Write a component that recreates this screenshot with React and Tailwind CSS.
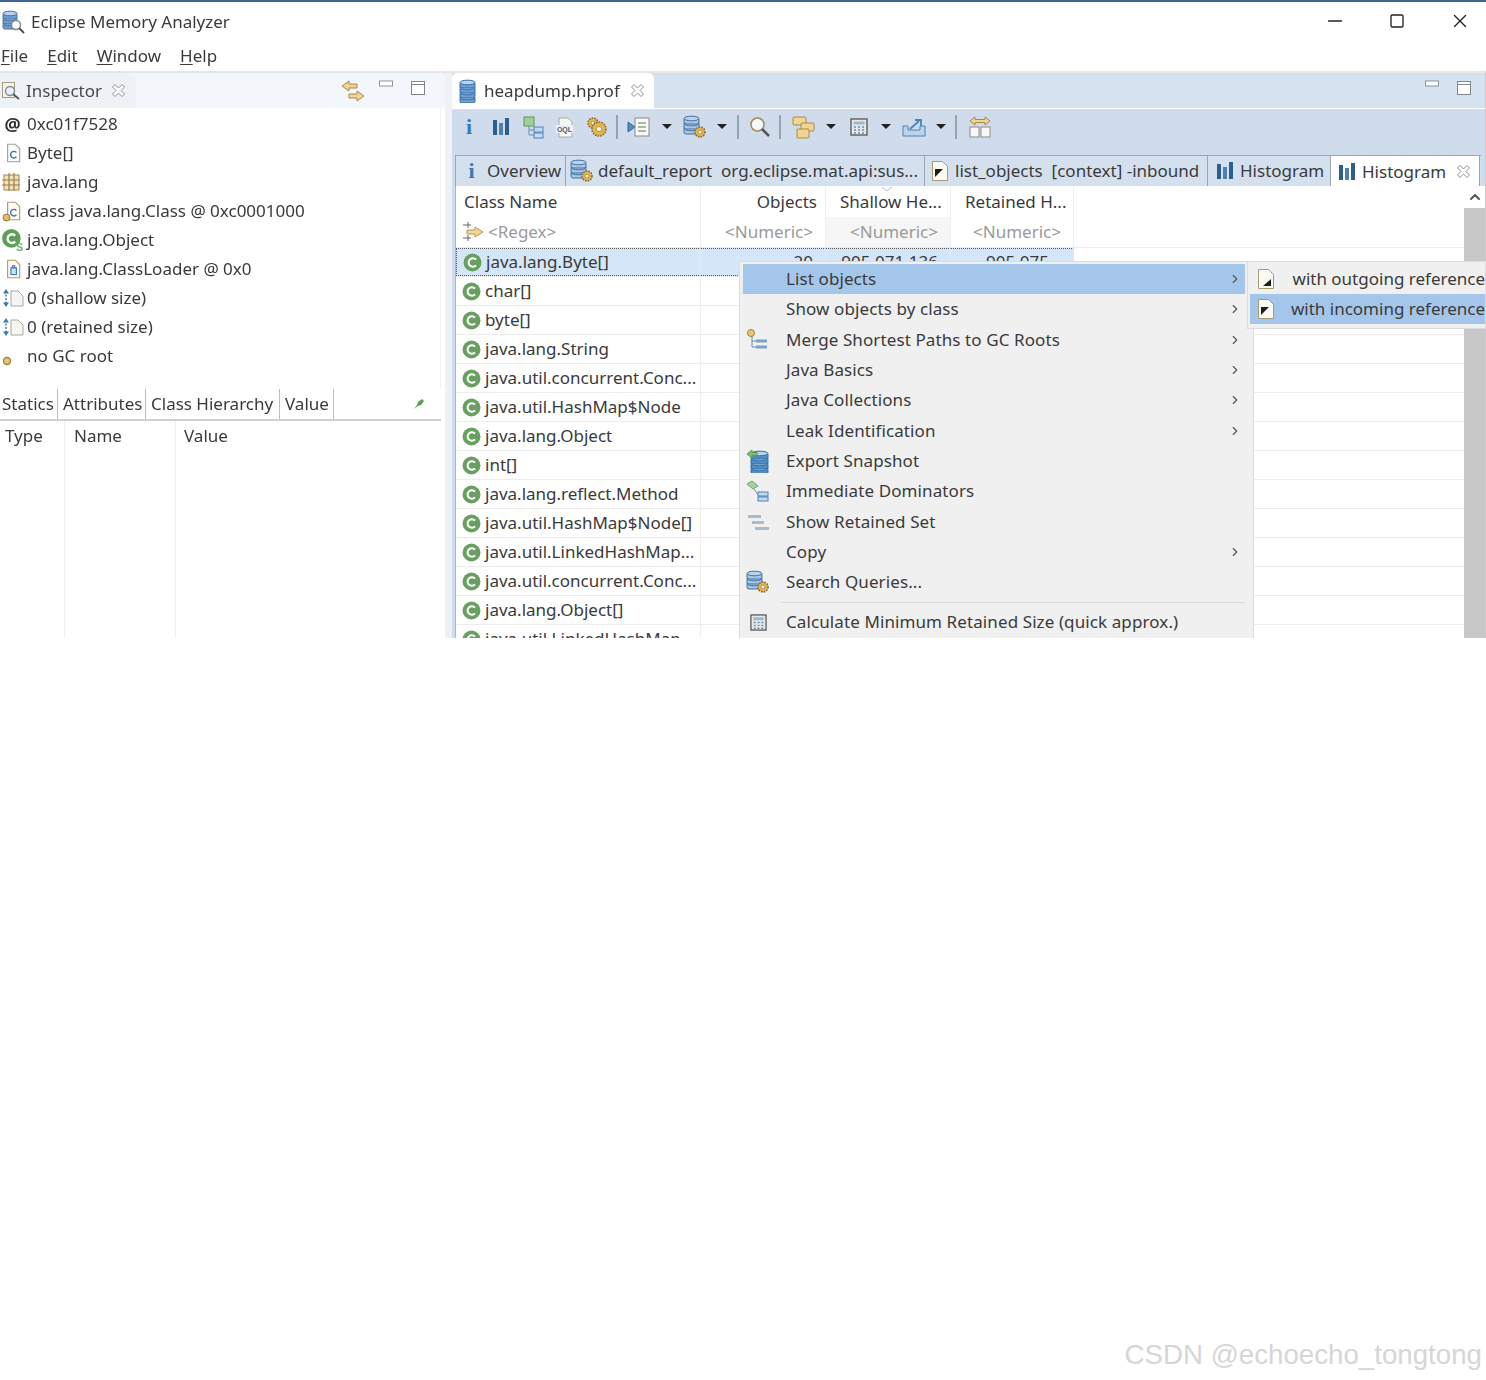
import { ChevronRight, ChevronUp, Minus, Square, X } from 'lucide-react';

const font = { fontFamily: '"Noto Sans", "Liberation Sans", sans-serif' };

function Cylinders({ x = 0, y = 0, w = 14, n = 3, fill = '#6f9fd0', stroke = '#3f6f9f' }) {
    const rows = [];
    for (let i = n - 1; i >= 0; i--) {
        rows.push(
            <g key={i}>
                <rect x={x} y={y + i * 5 + 2} width={w} height={6} fill={fill} stroke={stroke} strokeWidth="1" rx="2" />
                <ellipse cx={x + w / 2} cy={y + i * 5 + 2.5} rx={w / 2} ry={2.3} fill="#b9d3ec" stroke={stroke} strokeWidth="1" />
            </g>
        );
    }
    return <g>{rows}</g>;
}

function Gear({ cx, cy, r = 4 }) {
    return (
        <g>
            <circle cx={cx} cy={cy} r={r} fill="#e2b552" stroke="#8a6a2c" strokeWidth="1.6" strokeDasharray="1.6 1.1" />
            <circle cx={cx} cy={cy} r={r / 2.6} fill="#fff6da" stroke="#8a6a2c" strokeWidth=".6" />
        </g>
    );
}

function HeapIcon() {
    return (
        <svg width="20" height="24" viewBox="0 0 20 24" className="shrink-0">
            <Cylinders x={2} y={1} w={15} n={4} fill="#6d9fd3" stroke="#2f6aa5" />
        </svg>
    );
}

function AppIcon() {
    return (
        <svg width="24" height="24" viewBox="0 0 24 24" className="shrink-0">
            <Cylinders x={2} y={1} w={14} n={3} />
            <circle cx="15" cy="15" r="4.5" fill="#fff" stroke="#7a8a96" strokeWidth="1.4" />
            <path d="M18 18l5 5" stroke="#555" strokeWidth="2" />
        </svg>
    );
}

function InspectorIcon() {
    return (
        <svg width="20" height="20" viewBox="0 0 20 20" className="shrink-0">
            <rect x="1.5" y="1.5" width="12" height="15" fill="#f5f3ea" stroke="#a59b7f" />
            <circle cx="9" cy="10" r="4.5" fill="#e8f1f8" stroke="#7a8a96" strokeWidth="1.3" />
            <path d="M12 13l6 5" stroke="#555" strokeWidth="1.8" />
        </svg>
    );
}

function TabClose({ className = '' }) {
    return (
        <svg width="15" height="15" viewBox="0 0 15 15" className={`shrink-0 ${className}`}>
            <path d="M1.500 4L4 1.500l3.500 3.500L11 1.500 13.500 4 10 7.500l3.500 3.500-2.500 2.500L7.500 10 4 13.500 1.500 11 5 7.500z" fill="#fff" stroke="#8f8f8f" />
        </svg>
    );
}

function ViewButtons({ className }) {
    return (
        <div className={`flex items-start ${className}`}>
            <svg width="14" height="8" viewBox="0 0 14 8"><rect x=".5" y="1" width="13" height="5" fill="#fff" stroke="#8c949c" /></svg>
            <svg width="16" height="16" viewBox="0 0 16 16" className="ml-[17px]"><rect x="1.500" y="1.500" width="13" height="13" fill="#fff" stroke="#7f868c" /><path d="M1.500 4.500h13" stroke="#7f868c" /></svg>
        </div>
    );
}

function InfoIcon() {
    return <span className="w-[14px] text-center font-bold text-[22px] leading-none text-[#3c78ad]" style={{ fontFamily: '"Liberation Serif", serif' }}>i</span>;
}

function BarsIcon() {
    return (
        <svg width="18" height="18" viewBox="0 0 18 18" className="shrink-0">
            <rect x="1" y="2" width="4" height="15" fill="#2f5d8c" />
            <rect x="7" y="5" width="4" height="12" fill="#4a80b4" />
            <rect x="13" y="0" width="4" height="17" fill="#2f5d8c" />
        </svg>
    );
}

function TreeIcon() {
    return (
        <svg width="24" height="24" viewBox="0 0 24 24" className="shrink-0">
            <rect x="2" y="2" width="10" height="9" fill="#9fcf9a" stroke="#5c9a58" />
            <path d="M7 11v9h5M7 15h5" stroke="#6b8bab" fill="none" />
            <rect x="12" y="12" width="9" height="5" fill="#c4d9ee" stroke="#4d82b5" />
            <rect x="12" y="18" width="9" height="5" fill="#c4d9ee" stroke="#4d82b5" />
        </svg>
    );
}

function OqlIcon() {
    return (
        <svg width="20" height="22" viewBox="0 0 20 22" className="shrink-0">
            <path d="M4 2h9l4 4v15H4z" fill="#f7f7f5" stroke="#aaa" />
            <rect x="1" y="9" width="17" height="8" fill="#eef2f6" />
            <text x="9.500" y="15.500" fontSize="7" fontWeight="700" fill="#4a5f75" textAnchor="middle" fontFamily="Liberation Sans">OQL</text>
        </svg>
    );
}

function GearsIcon() {
    return (
        <svg width="24" height="24" viewBox="0 0 24 24" className="shrink-0">
            <Gear cx={8} cy={8} r={5} />
            <Gear cx={14} cy={14} r={7} />
        </svg>
    );
}

function ExpandIcon() {
    return (
        <svg width="24" height="22" viewBox="0 0 24 22" className="shrink-0">
            <path d="M1 6l7 5-7 5z" fill="#4f8fc7" stroke="#2f6aa5" />
            <rect x="8" y="2" width="14" height="18" fill="#f8f8f4" stroke="#888" />
            <path d="M11 7h8M11 11h8M11 15h8" stroke="#88a58a" strokeWidth="1.500" />
        </svg>
    );
}

function HeapGearIcon({ size = 24 }) {
    return (
        <svg width={size} height={size} viewBox="0 0 24 24" className="shrink-0">
            <Cylinders x={1} y={1} w={15} n={3} fill="#a9c8e8" />
            <Gear cx={17} cy={17} r={5} />
        </svg>
    );
}

function SearchIcon() {
    return (
        <svg width="22" height="22" viewBox="0 0 22 22" className="shrink-0">
            <circle cx="8.500" cy="8.500" r="6.500" fill="#f5f8fb" stroke="#a08a5c" strokeWidth="1.500" />
            <path d="M13 13l7 7" stroke="#555" strokeWidth="2.500" />
        </svg>
    );
}

function GroupIcon() {
    return (
        <svg width="24" height="24" viewBox="0 0 24 24" className="shrink-0">
            <rect x="1" y="2" width="13" height="8" rx="1" fill="#f0d594" stroke="#a98a45" />
            <rect x="9" y="8" width="13" height="8" rx="1" fill="#f0d594" stroke="#a98a45" />
            <rect x="5" y="14" width="12" height="9" rx="1" fill="#f0d594" stroke="#a98a45" />
        </svg>
    );
}

function CalcIcon({ size = 18 }) {
    return (
        <svg width={size} height={size} viewBox="0 0 18 18" className="shrink-0">
            <rect x="1" y="1" width="16" height="16" fill="#e4e8ec" stroke="#5e5e5e" strokeWidth="1.400" />
            <rect x="3.500" y="3.500" width="11" height="3" fill="#9fb7cc" />
            <path d="M4 9h2M8 9h2M12 9h2M4 12h2M8 12h2M12 12h2M4 15h2M8 15h2M12 15h2" stroke="#6f8aa3" strokeWidth="1.500" />
        </svg>
    );
}

function ExportIcon() {
    return (
        <svg width="24" height="20" viewBox="0 0 24 20" className="shrink-0">
            <path d="M1 9v10h22V9h-5v4H6V9z" fill="#bcd4ea" stroke="#4d82b5" />
            <path d="M8 12l9-8M13 3h6v6" fill="none" stroke="#4d82b5" strokeWidth="1.800" />
        </svg>
    );
}

function CompareIcon() {
    return (
        <svg width="24" height="24" viewBox="0 0 24 24" className="shrink-0">
            <path d="M2 6l5-4v2.500h10V2l5 4-5 4V7.500H7V10z" fill="#f0d594" stroke="#a98a45" />
            <rect x="2" y="12" width="9" height="10" fill="#f7f7f5" stroke="#8a8a8a" />
            <rect x="13" y="12" width="9" height="10" fill="#f7f7f5" stroke="#8a8a8a" />
        </svg>
    );
}

function DropArrow() {
    return <span className="w-0 h-0 border-x-[5px] border-x-transparent border-t-[5px] border-t-[#222]" />;
}

function ToolSep() {
    return <span className="w-[2px] h-[24px] bg-[#98a3b0]" />;
}

function ClassCircle({ size = 19 }) {
    return (
        <svg width={size} height={size} viewBox="0 0 18 18" className="shrink-0">
            <circle cx="9" cy="9" r="8.500" fill="#67a05f" />
            <path d="M12.300 6.300a4 4 0 1 0 0 5.400" fill="none" stroke="#fff" strokeWidth="2" />
        </svg>
    );
}

function DocClassIcon({ stroke = '#8fa3b8', dot = false, loader = false }) {
    return (
        <svg width="22" height="22" viewBox="0 0 20 20" className="shrink-0">
            <path d="M6 2h7l4 4v12H6z" fill="#fbfaf5" stroke={loader ? '#b09a6a' : stroke} />
            {loader ? (
                <path d="M9 9h5v6H9zM10.500 9V7h2v2" fill="#cfe0f0" stroke="#3f78ad" />
            ) : (
                <path d="M14 9.500a3 3 0 1 0 0 4" fill="none" stroke="#3f78ad" strokeWidth="1.300" />
            )}
            {dot && <circle cx="5" cy="16" r="3" fill="#e2bd6a" stroke="#a5813a" />}
        </svg>
    );
}

function PackageIcon() {
    return (
        <svg width="20" height="20" viewBox="0 0 20 20" className="shrink-0">
            <rect x="3" y="3" width="15" height="15" fill="#f3e2b8" stroke="#a0854e" />
            <path d="M8 1v18M13 1v18M1 8h18M1 13h18" stroke="#9c7d48" strokeWidth="1.200" />
        </svg>
    );
}

function BigClassIcon() {
    return (
        <svg width="24" height="24" viewBox="0 0 22 22" className="shrink-0">
            <circle cx="9.500" cy="9.500" r="8.500" fill="#5fa058" />
            <path d="M13 7a4 4 0 1 0 0 5.500" fill="none" stroke="#fff" strokeWidth="2.200" />
            <text x="17" y="21" fontSize="10" fontWeight="700" fill="#6fb36a" textAnchor="middle" fontFamily="Liberation Sans">S</text>
        </svg>
    );
}

function SizeIcon() {
    return (
        <svg width="24" height="20" viewBox="0 0 24 20" className="shrink-0">
            <path d="M5 3v14" stroke="#4d6f8f" strokeWidth="1.400" strokeDasharray="2 1.500" />
            <path d="M2 5.500L5 1 8 5.500z" fill="#3f78ad" />
            <path d="M2 14.500L5 19l3-4.500z" fill="#3f78ad" />
            <path d="M10 3h7l5 5v10H10z" fill="#f5f5f2" stroke="#a8a8a4" />
        </svg>
    );
}

function GcDot() {
    return (
        <svg width="20" height="20" viewBox="0 0 20 20" className="shrink-0">
            <circle cx="6" cy="15" r="3.500" fill="#e8c876" stroke="#a5813a" strokeWidth="1.400" />
        </svg>
    );
}

function Mnemonic({ first, rest }) {
    return (
        <span>
            <span className="underline underline-offset-2">{first}</span>
            {rest}
        </span>
    );
}

const inspectorRows = [
    { label: '0xc01f7528', icon: <span className="w-[22px] pl-[1px] text-center font-bold text-[18px] leading-none text-[#333]">@</span> },
    { label: 'Byte[]', icon: <DocClassIcon /> },
    { label: 'java.lang', icon: <PackageIcon /> },
    { label: 'class java.lang.Class @ 0xc0001000', icon: <DocClassIcon stroke="#b09a6a" dot /> },
    { label: 'java.lang.Object', icon: <BigClassIcon /> },
    { label: 'java.lang.ClassLoader @ 0x0', icon: <DocClassIcon loader /> },
    { label: '0 (shallow size)', icon: <SizeIcon /> },
    { label: '0 (retained size)', icon: <SizeIcon /> },
    { label: 'no GC root', icon: <GcDot /> },
];

const classRows = [
    'java.lang.Byte[]',
    'char[]',
    'byte[]',
    'java.lang.String',
    'java.util.concurrent.Conc...',
    'java.util.HashMap$Node',
    'java.lang.Object',
    'int[]',
    'java.lang.reflect.Method',
    'java.util.HashMap$Node[]',
    'java.util.LinkedHashMap...',
    'java.util.concurrent.Conc...',
    'java.lang.Object[]',
    'java.util.LinkedHashMap...',
];

function MergeIcon() {
    return (
        <svg width="24" height="24" viewBox="0 0 24 24" className="shrink-0">
            <circle cx="5" cy="5" r="3.500" fill="#e8c876" stroke="#a5813a" />
            <path d="M6 8v11h4M6 13h4" stroke="#6b8bab" fill="none" />
            <path d="M10 13h11M10 19h11" stroke="#7fa2c4" strokeWidth="3" />
        </svg>
    );
}

function SnapshotIcon() {
    return (
        <svg width="24" height="24" viewBox="0 0 24 24" className="shrink-0">
            <Cylinders x={5} y={2} w={17} n={4} fill="#4f8fc7" stroke="#2f6aa5" />
            <path d="M1 5l5-4v2.500h5v3H6V9z" fill="#7fc06f" stroke="#5c9a58" />
        </svg>
    );
}

function DominatorIcon() {
    return (
        <svg width="24" height="24" viewBox="0 0 24 24" className="shrink-0">
            <path d="M1 5l5-3 6 5-5 3z" fill="#a5d49e" stroke="#6aa564" />
            <path d="M8 10l5 7h9" stroke="#7a94ad" fill="none" />
            <rect x="12" y="13" width="10" height="4" fill="#c4d9ee" stroke="#4d82b5" />
            <rect x="12" y="18" width="10" height="4" fill="#c4d9ee" stroke="#4d82b5" />
        </svg>
    );
}

function RetainedIcon() {
    return (
        <svg width="24" height="20" viewBox="0 0 24 20" className="shrink-0">
            <rect x="2" y="3" width="13" height="3" fill="#a9bccf" />
            <rect x="6" y="9" width="12" height="3" fill="#a9bccf" />
            <rect x="9" y="15" width="14" height="3" fill="#a9bccf" />
        </svg>
    );
}

const menuRows = [
    { label: 'List objects', arrow: true, active: true, h: 'h-[30px]' },
    { label: 'Show objects by class', arrow: true, h: 'h-[30px]' },
    { label: 'Merge Shortest Paths to GC Roots', arrow: true, icon: <MergeIcon />, h: 'h-[31px]' },
    { label: 'Java Basics', arrow: true, h: 'h-[30px]' },
    { label: 'Java Collections', arrow: true, h: 'h-[30px]' },
    { label: 'Leak Identification', arrow: true, h: 'h-[31px]' },
    { label: 'Export Snapshot', icon: <SnapshotIcon />, h: 'h-[30px]' },
    { label: 'Immediate Dominators', icon: <DominatorIcon />, h: 'h-[30px]' },
    { label: 'Show Retained Set', icon: <RetainedIcon />, h: 'h-[31px]' },
    { label: 'Copy', arrow: true, h: 'h-[30px]' },
    { label: 'Search Queries...', icon: <HeapGearIcon />, h: 'h-[30px]' },
];

function ContextMenu() {
    return (
        <div className="absolute left-[739px] top-[259px] w-[515px] h-[390px] bg-[#f0f0f0] border border-[#dcdcdc] pl-[3px] pr-[8px] pt-[2px] text-[#3a3a3a] tracking-[0.1px]">
            {menuRows.map(row => (
                <div key={row.label} className={`flex items-center ${row.h} ${row.active ? 'bg-[#a5c6eb]' : ''}`}>
                    <span className="w-[43px] pl-[3px] flex items-center">{row.icon}</span>
                    <span className="flex-1">{row.label}</span>
                    {row.arrow && <ChevronRight size={14} strokeWidth={2} className="mr-[3px] text-[#555]" />}
                </div>
            ))}
            <div className="h-[1px] mt-[5px] ml-[38px] bg-[#d8d8d8]" />
            <div className="flex items-center h-[38px]">
                <span className="w-[43px] pl-[7px] flex items-center"><CalcIcon size={17} /></span>
                <span>Calculate Minimum Retained Size (quick approx.)</span>
            </div>
        </div>
    );
}

function PageBadge({ corner }) {
    return (
        <svg width="18" height="22" viewBox="0 0 18 22" className="shrink-0">
            <path d="M1.500 1.500h10l5 5v14h-15z" fill="#fbfaf2" stroke="#a79a74" />
            {corner === 'out' ? <path d="M14 11v7H6z" fill="#1d1d1d" /> : <path d="M4 9h8l-8 8z" fill="#1d1d1d" />}
        </svg>
    );
}

function SubMenu() {
    return (
        <div className="absolute left-[1247px] top-[259px] w-[239px] h-[68px] bg-[#f0f0f0] border border-[#dcdcdc] pl-[2px] pt-[2px] text-[#3a3a3a] whitespace-nowrap overflow-hidden">
            <div className="flex items-center h-[30px]">
                <span className="w-[44px] pl-[7px] flex"><PageBadge corner="out" /></span>
                with outgoing reference
            </div>
            <div className="flex items-center h-[30px] bg-[#a5c6eb]">
                <span className="w-[44px] pl-[7px] flex"><PageBadge corner="in" /></span>
                with incoming reference
            </div>
        </div>
    );
}

function LeftPanel() {
    return (
        <div className="w-[445px] shrink-0 flex flex-col bg-white rounded-tr-[6px] overflow-hidden">
            <div className="flex items-center h-[35px] bg-[#f3f6fa]">
                <div className="flex items-center w-[136px] h-full pl-[1px] bg-[#eef2f7] rounded-tr-[8px] text-[#4a4a4a]">
                    <InspectorIcon />
                    <span className="ml-[5px]">Inspector</span>
                    <TabClose className="ml-[9px]" />
                </div>
                <svg width="24" height="24" viewBox="0 0 24 24" className="ml-[205px] shrink-0">
                    <path d="M1 7l7-5v3h8v4H8v3z" fill="#f0d594" stroke="#a98a45" />
                    <path d="M23 17l-7 5v-3H8v-4h8v-3z" fill="#f0d594" stroke="#a98a45" />
                </svg>
                <ViewButtons className="ml-[14px] -mt-[5px]" />
            </div>
            <div className="pt-[1px] h-[281px] border-r border-r-[#f0f0f0] mr-[4px]">
                {inspectorRows.map(row => (
                    <div key={row.label} className="flex items-center h-[29px]">
                        <span className="w-[27px] pl-[1px] flex items-center shrink-0">{row.icon}</span>
                        <span>{row.label}</span>
                    </div>
                ))}
            </div>
            <div className="flex items-end h-[32px] mr-[4px] border-b-2 border-b-[#cfcfcf]">
                <span className="w-[58px] h-full pl-[2px] flex items-center border-r border-r-[#bdbdbd]">Statics</span>
                <span className="w-[88px] h-full pl-[5px] flex items-center border-r border-r-[#bdbdbd]">Attributes</span>
                <span className="w-[134px] h-full pl-[5px] flex items-center border-r border-r-[#bdbdbd]">Class Hierarchy</span>
                <span className="w-[54px] h-full pl-[5px] flex items-center border-r border-r-[#bdbdbd]">Value</span>
                <svg width="14" height="14" viewBox="0 0 14 14" className="ml-auto mr-[15px] self-center">
                    <path d="M2 12l3-4 1-3 4-3 2 2-3 4-3 1z" fill="#5f9a55" />
                </svg>
            </div>
            <div className="flex flex-1 text-[#3a3a3a]">
                <div className="w-[65px] pl-[5px] pt-[2px] border-r border-r-[#f0f0f0]">Type</div>
                <div className="w-[111px] pl-[9px] pt-[2px] border-r border-r-[#f0f0f0]">Name</div>
                <div className="pl-[8px] pt-[2px]">Value</div>
            </div>
        </div>
    );
}

function Toolbar() {
    return (
        <div className="flex items-center h-[39px] shrink-0 mt-[1px] pl-[10px] pb-[6px] bg-[#d0dcec]">
            <span className="w-[14px] flex justify-center"><InfoIcon /></span>
            <span className="w-[34px] flex justify-end"><BarsIcon /></span>
            <span className="w-[36px] flex justify-end"><TreeIcon /></span>
            <span className="w-[29px] flex justify-end"><OqlIcon /></span>
            <span className="w-[34px] flex justify-end"><GearsIcon /></span>
            <span className="w-[9px] flex justify-end"><ToolSep /></span>
            <span className="w-[33px] flex justify-end"><ExpandIcon /></span>
            <span className="w-[21px] flex justify-end"><DropArrow /></span>
            <span className="w-[35px] flex justify-end"><HeapGearIcon /></span>
            <span className="w-[20px] flex justify-end"><DropArrow /></span>
            <span className="w-[12px] flex justify-end"><ToolSep /></span>
            <span className="w-[32px] flex justify-end"><SearchIcon /></span>
            <span className="w-[10px] flex justify-end"><ToolSep /></span>
            <span className="w-[35px] flex justify-end"><GroupIcon /></span>
            <span className="w-[20px] flex justify-end"><DropArrow /></span>
            <span className="w-[32px] flex justify-end"><CalcIcon /></span>
            <span className="w-[23px] flex justify-end"><DropArrow /></span>
            <span className="w-[35px] flex justify-end"><ExportIcon /></span>
            <span className="w-[20px] flex justify-end"><DropArrow /></span>
            <span className="w-[11px] flex justify-end"><ToolSep /></span>
            <span className="w-[35px] flex justify-end"><CompareIcon /></span>
        </div>
    );
}

function InnerTabs() {
    const tabClass = 'flex items-center h-full border-r border-r-[#9aa5b3] whitespace-pre';
    return (
        <div className="flex items-stretch h-[31px] shrink-0 mt-[6px] ml-[3px] mr-[4px] bg-[#d5e0ee] border-t border-t-[#9aa5b3] border-l border-l-[#9aa5b3] text-[#3a3a3a]">
            <div className={`${tabClass} w-[110px]`}>
                <span className="w-[31px] flex justify-center"><InfoIcon /></span>
                Overview
            </div>
            <div className={`${tabClass} w-[359px] pl-[4px]`}>
                <HeapGearIcon />
                <span className="ml-[4px]">default_report  org.eclipse.mat.api:sus...</span>
            </div>
            <div className={`${tabClass} w-[283px] pl-[6px]`}>
                <PageBadge corner="in" />
                <span className="ml-[6px]">list_objects  [context] -inbound</span>
            </div>
            <div className={`${tabClass} w-[123px] pl-[8px]`}>
                <BarsIcon />
                <span className="ml-[6px]">Histogram</span>
            </div>
            <div className="flex items-center w-[149px] -mb-[1px] pl-[7px] bg-white border-r border-r-[#9aa5b3]">
                <BarsIcon />
                <span className="ml-[6px]">Histogram</span>
                <TabClose className="ml-[10px]" />
            </div>
        </div>
    );
}

function HistogramTable() {
    const selected = 'bg-[#d5e6f8] border-y border-dotted border-y-[#555]';
    return (
        <div className="flex flex-1 ml-[3px] bg-white border-l border-l-[#b5b5b5]">
            <div className="flex-1 min-w-0">
                <div className="flex h-[31px] items-center text-[#3a3a3a]">
                    <div className="w-[245px] pl-[8px] h-full flex items-center border-r border-r-[#f0f0f0]">Class Name</div>
                    <div className="w-[125px] pr-[8px] h-full flex items-center justify-end border-r border-r-[#f0f0f0]">Objects</div>
                    <div className="relative w-[125px] pl-[14px] h-full flex items-center border-r border-r-[#f0f0f0]">
                        <svg width="12" height="6" viewBox="0 0 12 6" className="absolute left-[55px] top-0">
                            <path d="M1 1l5 4 5-4" fill="none" stroke="#bbb" />
                        </svg>
                        Shallow He...
                    </div>
                    <div className="w-[123px] pl-[14px] h-full flex items-center border-r border-r-[#f0f0f0]">Retained H...</div>
                </div>
                <div className="flex h-[31px] items-center text-[#9a9a9a] border-b border-b-[#ececec]">
                    <div className="w-[245px] pl-[6px] h-full flex items-center border-r border-r-[#f0f0f0]">
                        <svg width="24" height="22" viewBox="0 0 24 22" className="shrink-0">
                            <path d="M1 4h8M6 1v6M1 17h8M6 14v6" stroke="#666" />
                            <path d="M5 9h8V6l8 5-8 5v-3H5z" fill="#f0d594" stroke="#b39a5c" />
                        </svg>
                        <span className="ml-[2px]">&lt;Regex&gt;</span>
                    </div>
                    <div className="w-[125px] pr-[12px] h-full flex items-center justify-end border-r border-r-[#f0f0f0]">&lt;Numeric&gt;</div>
                    <div className="w-[125px] pr-[12px] h-full flex items-center justify-end bg-[#f6f6f6] border-r border-r-[#f0f0f0]">&lt;Numeric&gt;</div>
                    <div className="w-[123px] pr-[12px] h-full flex items-center justify-end border-r border-r-[#f0f0f0]">&lt;Numeric&gt;</div>
                </div>
                {classRows.map((name, i) => (
                    <div key={i} className="flex h-[29px] items-center border-b border-b-[#ececec]">
                        <div className={`w-[245px] pl-[6px] h-full flex items-center border-r border-r-[#f0f0f0] ${i === 0 ? `${selected} border-l border-l-[#555]` : ''}`}>
                            <ClassCircle />
                            <span className="ml-[4px]">{name}</span>
                        </div>
                        <div className={`w-[125px] pr-[12px] h-full flex items-center justify-end border-r border-r-[#f0f0f0] ${i === 0 ? selected : ''}`}>{i === 0 ? '20' : ''}</div>
                        <div className={`w-[125px] pr-[12px] h-full flex items-center justify-end border-r border-r-[#f0f0f0] ${i === 0 ? selected : ''}`}>{i === 0 ? '905,071,136' : ''}</div>
                        <div className={`w-[123px] pr-[24px] h-full flex items-center justify-end border-r border-r-[#f0f0f0] ${i === 0 ? `${selected} border-r-[#555]` : ''}`}>{i === 0 ? '905,075' : ''}</div>
                    </div>
                ))}
            </div>
            <div className="w-[21px] shrink-0 flex flex-col">
                <div className="h-[22px] flex items-center justify-center">
                    <ChevronUp size={16} strokeWidth={3} className="text-[#555]" />
                </div>
                <div className="flex-1 bg-[#c8c8c8]" />
            </div>
        </div>
    );
}

function RightPanel() {
    return (
        <div className="flex-1 min-w-0 flex flex-col ml-[7px] bg-[#d6e2f0] overflow-hidden">
            <div className="flex items-center h-[35px] shrink-0">
                <div className="flex items-center w-[202px] h-full pl-[6px] bg-white rounded-t-[6px] text-[#3a3a3a]">
                    <HeapIcon />
                    <span className="ml-[6px]">heapdump.hprof</span>
                    <TabClose className="ml-[10px]" />
                </div>
                <ViewButtons className="ml-auto mr-[13px] -mt-[5px]" />
            </div>
            <div className="h-[1px] shrink-0 bg-white" />
            <Toolbar />
            <div className="bg-[#d0dcec] flex-1 flex flex-col min-h-0">
                <InnerTabs />
                <HistogramTable />
            </div>
        </div>
    );
}

export default function App() {
    return (
        <div className="w-[1486px] h-[1380px] flex flex-col bg-white" style={font}>
            <div className="relative h-[638px] flex flex-col overflow-hidden text-[17px] text-[#3a3a3a] border-t-2 border-t-[#3f6592] blur-[0.4px]">
                <div className="flex items-center h-[39px] shrink-0 pl-[1px]">
                    <AppIcon />
                    <span className="ml-[6px]">Eclipse Memory Analyzer</span>
                    <div className="ml-auto flex items-center -mt-[2px] text-[#222]">
                        <Minus size={22} strokeWidth={1.500} />
                        <Square size={16} strokeWidth={2} className="ml-[43px]" />
                        <X size={22} strokeWidth={1.500} className="ml-[44px] mr-[15px]" />
                    </div>
                </div>
                <div className="flex items-center h-[30px] shrink-0 pl-[1px] gap-[19px]">
                    <Mnemonic first="F" rest="ile" />
                    <Mnemonic first="E" rest="dit" />
                    <Mnemonic first="W" rest="indow" />
                    <Mnemonic first="H" rest="elp" />
                </div>
                <div className="flex flex-1 min-h-0 bg-[#eef2f8] border-t-2 border-t-[#e6e6e6] border-r border-r-[#cccccc]">
                    <LeftPanel />
                    <RightPanel />
                </div>
                <ContextMenu />
                <SubMenu />
            </div>
            <div className="flex-1 flex justify-end items-end pr-[4px] pb-[11px]">
                <span className="text-[27.7px] leading-none text-[#d6d6d6]" style={{ fontFamily: '"Liberation Sans", sans-serif' }}>CSDN @echoecho_tongtong</span>
            </div>
        </div>
    );
}
